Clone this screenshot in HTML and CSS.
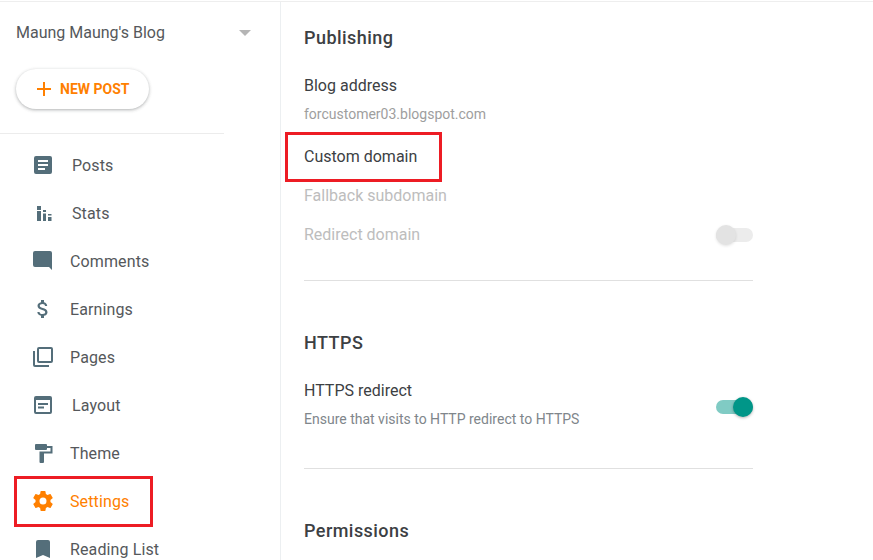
FILE: index.html
```html
<!DOCTYPE html>
<html lang="en">
<head>
<meta charset="utf-8">
<title>Settings</title>
<link rel="stylesheet" href="styles.css">
</head>
<body>
<div class="app">
  <aside class="sidebar">
    <div class="blog-row">
      <span class="blog-name">Maung Maung's Blog</span>
      <span class="caret"></span>
    </div>
    <div class="new-post-wrap">
      <button class="new-post">
        <svg class="plus" viewBox="0 0 16 16" width="16" height="16"><path d="M7 1h2v6h6v2H9v6H7V9H1V7h6z"/></svg>
        <span>NEW POST</span>
      </button>
    </div>
    <div class="side-divider"></div>
    <nav class="nav">
      <a class="nav-item ind-wide"><svg class="ico" viewBox="0 0 24 24"><path d="M19 3H5a2 2 0 0 0-2 2v14a2 2 0 0 0 2 2h14a2 2 0 0 0 2-2V5a2 2 0 0 0-2-2zm-5 14H7v-2h7v2zm3-4H7v-2h10v2zm0-4H7V7h10v2z"/></svg><span>Posts</span></a>
      <a class="nav-item ind-wide"><svg class="ico" viewBox="0 0 24 24"><path d="M6 5h4v4H6zM6 10h4v10H6zM12 9h3v2h-3zM12 12.500h3V20h-3zM17 13h3.500v1.500H17zM17 16h3.500v4H17z"/></svg><span>Stats</span></a>
      <a class="nav-item"><svg class="ico" viewBox="0 0 24 24"><path d="M21 4a2 2 0 0 0-2-2H4a2 2 0 0 0-2 2v12a2 2 0 0 0 2 2h14l3 3V4z"/></svg><span>Comments</span></a>
      <a class="nav-item"><svg class="ico" viewBox="0 0 24 24"><path d="M11.800 10.900c-2.270-.59-3-1.200-3-2.150 0-1.090 1.010-1.850 2.700-1.850 1.780 0 2.440.85 2.500 2.100h2.210c-.07-1.720-1.120-3.300-3.210-3.810V3h-3v2.160c-1.940.42-3.500 1.680-3.500 3.610 0 2.310 1.910 3.460 4.700 4.130 2.500.6 3 1.480 3 2.410 0 .69-.49 1.790-2.700 1.790-2.060 0-2.870-.92-2.980-2.100h-2.200c.12 2.190 1.760 3.420 3.680 3.830V21h3v-2.150c1.950-.37 3.500-1.500 3.500-3.550 0-2.840-2.430-3.810-4.700-4.400z"/></svg><span>Earnings</span></a>
      <a class="nav-item"><svg class="ico" viewBox="0 0 24 24"><path d="M4 6H2v14a2 2 0 0 0 2 2h14v-2H4V6zm16-4H8a2 2 0 0 0-2 2v12a2 2 0 0 0 2 2h12a2 2 0 0 0 2-2V4a2 2 0 0 0-2-2zm0 14H8V4h12v12z"/></svg><span>Pages</span></a>
      <a class="nav-item ind-wide"><svg class="ico" viewBox="0 0 24 24"><path d="M19 3H5a2 2 0 0 0-2 2v14a2 2 0 0 0 2 2h14a2 2 0 0 0 2-2V5a2 2 0 0 0-2-2zm0 16H5V7h14v12zM7 10h10v2H7zm0 3.500h6v2H7z"/></svg><span>Layout</span></a>
      <a class="nav-item"><svg class="ico" viewBox="0 0 24 24"><path d="M16 5V4a1 1 0 0 0-1-1H5a1 1 0 0 0-1 1v4a1 1 0 0 0 1 1h10a1 1 0 0 0 1-1V7h3.500v3.500H8.500V21a1 1 0 0 0 1 1h2.500a1 1 0 0 0 1-1v-8.500h8.500V5h-5.500z"/></svg><span>Theme</span></a>
      <a class="nav-item active"><svg class="ico" viewBox="0 0 24 24"><path d="M19.430 12.980c.04-.32.07-.64.07-.98s-.03-.66-.07-.98l2.110-1.650a.5.500 0 0 0 .12-.64l-2-3.460a.5.500 0 0 0-.61-.22l-2.490 1a7.300 7.300 0 0 0-1.690-.98l-.38-2.650A.49.490 0 0 0 14 2h-4a.49.490 0 0 0-.49.420l-.38 2.650c-.61.25-1.170.59-1.690.98l-2.490-1a.5.500 0 0 0-.61.220l-2 3.460a.49.490 0 0 0 .12.640l2.110 1.650c-.04.320-.07.650-.07.980s.03.660.07.980l-2.110 1.650a.5.500 0 0 0-.12.640l2 3.460c.12.220.39.300.61.220l2.490-1c.52.400 1.080.730 1.690.980l.38 2.650c.03.240.24.420.49.420h4c.25 0 .46-.18.490-.42l.38-2.650c.61-.25 1.170-.59 1.690-.98l2.490 1c.23.090.49 0 .61-.22l2-3.460a.5.500 0 0 0-.12-.64l-2.110-1.650zM12 15.500a3.500 3.500 0 1 1 0-7 3.500 3.500 0 0 1 0 7z"/></svg><span>Settings</span></a>
      <a class="nav-item"><svg class="ico" viewBox="0 0 24 24"><path d="M17 3H7a2 2 0 0 0-2 2v16l7-3 7 3V5a2 2 0 0 0-2-2z"/></svg><span>Reading List</span></a>
    </nav>
  </aside>
  <main class="content">
    <section class="section first">
      <h2 class="section-title">Publishing</h2>
      <div class="row-label addr">Blog address</div>
      <div class="row-sub">forcustomer03.blogspot.com</div>
      <div class="row-label custom">Custom domain</div>
      <div class="row-label disabled fallback">Fallback subdomain</div>
      <div class="toggle-row redirect">
        <div class="row-label disabled">Redirect domain</div>
        <span class="switch off"><span class="knob"></span></span>
      </div>
    </section>
    <section class="section https">
      <h2 class="section-title">HTTPS</h2>
      <div class="toggle-row https-row">
        <div>
          <div class="row-label">HTTPS redirect</div>
          <div class="row-sub small">Ensure that visits to HTTP redirect to HTTPS</div>
        </div>
        <span class="switch on"><span class="knob"></span></span>
      </div>
    </section>
    <section class="section last">
      <h2 class="section-title">Permissions</h2>
    </section>
  </main>
</div>
<div class="mark mark-settings"></div>
<div class="mark mark-domain"></div>
</body>
</html>
```
FILE: styles.css
```css
* { box-sizing: border-box; }
html, body { height: 100%; }
body {
  margin: 0;
  height: 560px;
  padding-top: 1px;
  overflow: hidden;
  background: #fff;
  font-family: Roboto, "Liberation Sans", sans-serif;
  color: #3c4043;
}
.app { display: flex; height: 559px; overflow: hidden; border-top: 1px solid #eeeeee; }
.sidebar {
  width: 281px;
  flex: none;
  border-right: 1px solid #eceff1;
}
.blog-row {
  display: flex;
  align-items: center;
  justify-content: space-between;
  height: 21px;
  margin-top: 20px;
  padding: 0 29px 0 16px;
}
.blog-name { font-size: 16px; color: #55585b; }
.caret {
  width: 0;
  height: 0;
  border-left: 6px solid transparent;
  border-right: 6px solid transparent;
  border-top: 6px solid #b5b5b5;
}
.new-post-wrap { padding: 26px 0 0 16px; }
.new-post {
  display: flex;
  align-items: center;
  gap: 8px;
  width: 133px;
  height: 40px;
  padding: 0 0 0 20px;
  border: 0;
  border-radius: 20px;
  background: #fff;
  box-shadow: 0 1px 3px rgba(60, 64, 67, .3), 0 1px 4px rgba(60, 64, 67, .12);
  color: #ff8000;
  font: 700 14px Roboto, sans-serif;
}
.plus { fill: #ff8000; flex: none; }
.side-divider { width: 224px; height: 1px; background: #ececec; margin-top: 24px; }
.nav { padding-top: 7px; }
.nav-item {
  display: flex;
  align-items: center;
  height: 48px;
  padding-left: 31px;
  gap: 15px;
  font-size: 16px;
  letter-spacing: .12px;
  color: #55585b;
}
.ico { width: 24px; height: 24px; fill: #546e7a; flex: none; }
.nav-item.ind-wide { gap: 17px; }
.nav-item.active { color: #ff8000; }
.active .ico { fill: #ff8000; }
.content { flex: 1; padding-left: 23px; }
.section { width: 449px; }
.first { height: 279px; border-bottom: 1px solid #e0e0e0; padding-top: 25px; }
.https { height: 188px; border-bottom: 1px solid #e0e0e0; padding-top: 51px; }
.last { padding-top: 51px; }
.section-title {
  margin: 0;
  font-size: 18px;
  line-height: 21px;
  font-weight: 500;
  color: #3c4043;
  letter-spacing: .45px;
}
.row-label { font-size: 16px; line-height: 20px; color: #3c4043; }
.row-sub { font-size: 14px; line-height: 20px; color: #9e9e9e; margin-top: 8px; }
.row-sub.small { color: #80868b; }
.addr { margin-top: 28px; }
.custom { margin-top: 23px; }
.fallback { margin-top: 19px; }
.row-label.disabled { color: #bdbdbd; }
.toggle-row { display: flex; align-items: center; justify-content: space-between; }
.redirect { margin-top: 19px; }
.https-row { margin-top: 28px; }
.https-row .switch { margin-top: 3px; }
.switch { position: relative; width: 37px; height: 14px; border-radius: 7px; flex: none; }
.knob { position: absolute; top: -3px; width: 20px; height: 20px; border-radius: 50%; }
.switch.off { background: #ececec; }
.off .knob { left: 0; background: #e3e3e3; box-shadow: 0 1px 3px rgba(0, 0, 0, .12); }
.switch.on { background: #80cbc4; }
.on .knob { right: 0; background: #009688; box-shadow: 0 1px 3px rgba(0, 0, 0, .3); }
.mark { position: absolute; border: 3px solid #ed1c24; }
.mark-settings { left: 14px; top: 476px; width: 139px; height: 51px; }
.mark-domain { left: 285px; top: 132px; width: 157px; height: 50px; }
```
